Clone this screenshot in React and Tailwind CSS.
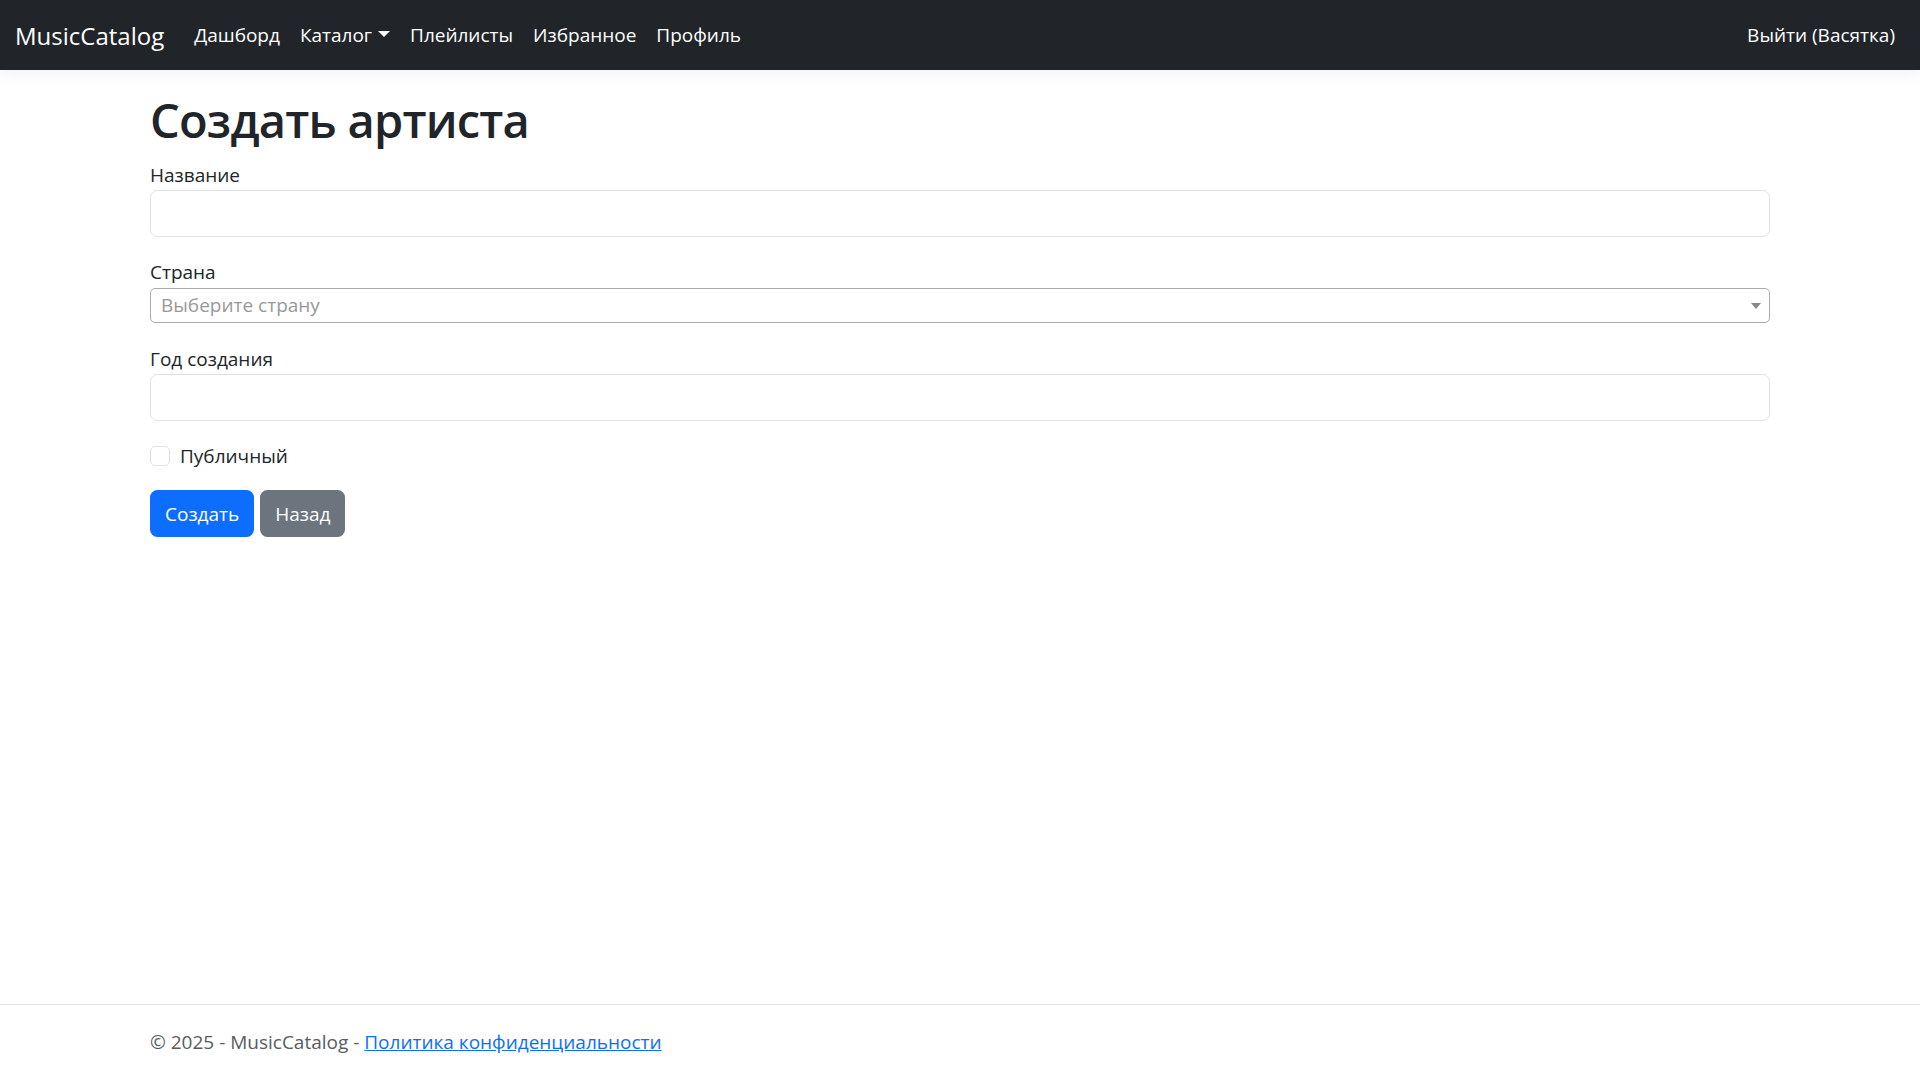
import React from 'react';

const navLinks = ['Дашборд', 'Каталог', 'Плейлисты', 'Избранное', 'Профиль'];

const Navbar = () => (
  <nav className="h-[70px] bg-[#212529] px-[15px] flex items-center justify-between shadow-[0_5px_15px_rgba(0,0,0,0.05)] relative z-10">
    <div className="flex items-center">
      <a className="text-[24px] leading-[37px] text-white mr-[20px]">MusicCatalog</a>
      <ul className="flex items-center">
        {navLinks.map((link) => (
          <li key={link}>
            <a className="block px-[10px] text-[19px] leading-[30px] text-white">
              {link}
              {link === 'Каталог' && (
                <span className="inline-block w-0 h-0 ml-[6px] align-[5px] border-x-[6px] border-x-transparent border-t-[6px] border-t-white" />
              )}
            </a>
          </li>
        ))}
      </ul>
    </div>
    <a className="block px-[10px] text-[19px] leading-[30px] text-white">Выйти (Васятка)</a>
  </nav>
);

const Field = ({ label }) => (
  <div className="mb-[20px]">
    <label className="block text-[19px] leading-[30px]">{label}</label>
    <input
      type="text"
      className="block w-full h-[47px] px-[15px] border border-[#dee2e6] rounded-[7.5px] bg-white outline-none"
    />
  </div>
);

export default function App() {
  return (
    <div className="h-screen flex flex-col bg-white text-[#212529] font-['Open_Sans','Noto_Sans',sans-serif]">
      <Navbar />

      <main className="flex-1 w-[1620px] mx-auto mt-[20px]">
        <h1 className="text-[47px] font-[550] tracking-[-0.8px] leading-[60px] mb-[10px]">Создать артиста</h1>

        <Field label="Название" />

        <div className="mb-[21px]">
          <label className="block text-[19px] leading-[30px]">Страна</label>
          <div className="relative h-[35px] mt-[1px] border border-[#aaa] rounded-[5px] bg-white flex items-center pl-[10px]">
            <span className="text-[19px] text-[#999]">Выберите страну</span>
            <span className="absolute right-[8px] top-[14px] w-0 h-0 border-x-[5px] border-x-transparent border-t-[6px] border-t-[#888]" />
          </div>
        </div>

        <Field label="Год создания" />

        <div className="mb-[19px] flex items-start">
          <span className="w-[20px] h-[20px] mt-[5px] border border-[#dee2e6] rounded-[5px] bg-white" />
          <label className="ml-[10px] text-[19px] leading-[30px]">Публичный</label>
        </div>

        <div className="flex gap-[6px]">
          <button className="h-[47px] px-[15px] rounded-[7.5px] bg-[#0d6efd] text-white text-[19px] leading-[30px]">
            Создать
          </button>
          <button className="h-[47px] px-[15px] rounded-[7.5px] bg-[#6c757d] text-white text-[19px] leading-[30px]">
            Назад
          </button>
        </div>
      </main>

      <footer className="border-t border-[#dee2e6] h-[76px]">
        <div className="w-[1620px] mx-auto text-[19px] leading-[75px] text-[#595c5f] whitespace-nowrap">
          © 2025 - MusicCatalog - <a className="text-[#0d6efd] underline">Политика конфиденциальности</a>
        </div>
      </footer>
    </div>
  );
}
